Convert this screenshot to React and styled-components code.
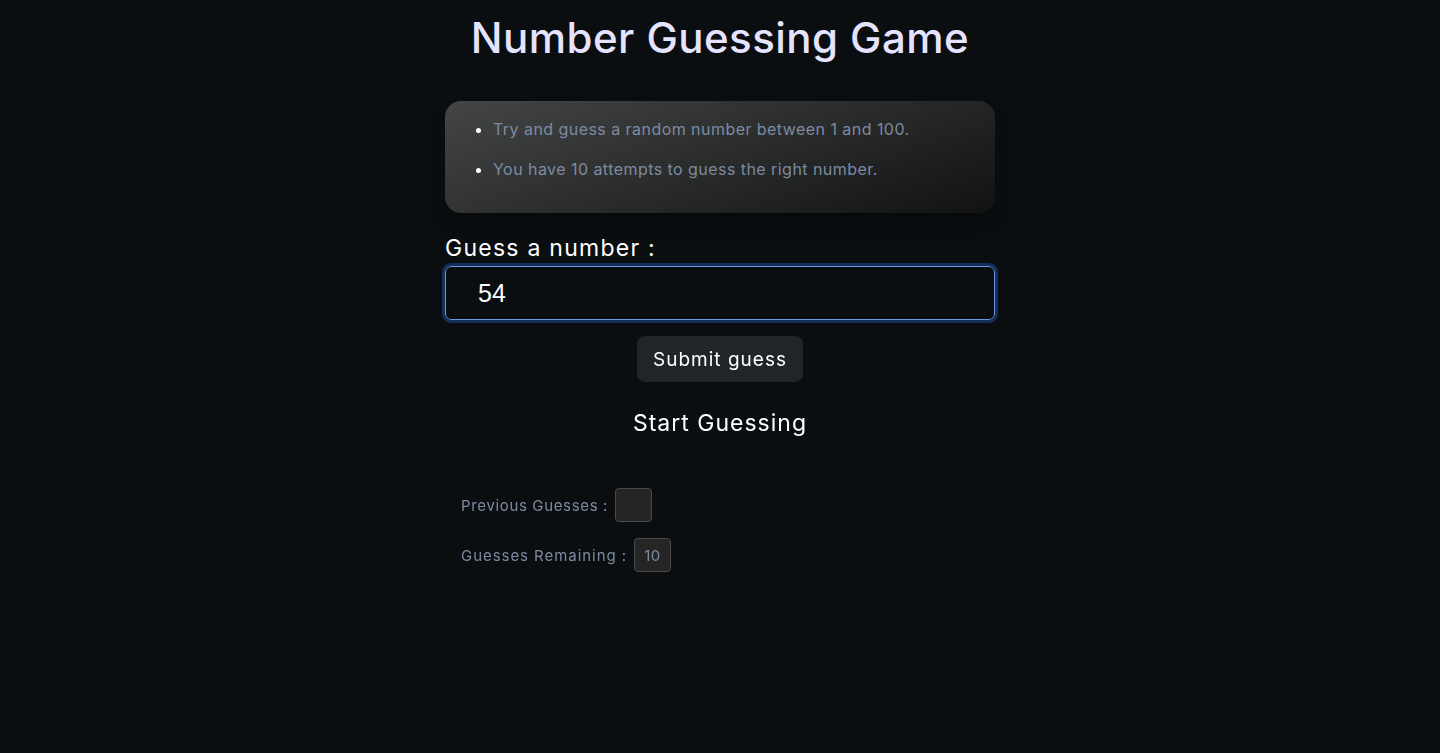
import React from 'react'
import styled, { createGlobalStyle } from 'styled-components'

const GlobalStyle = createGlobalStyle`
  * {
    box-sizing: border-box;
  }

  body {
    margin: 0;
    background-color: #0b0e10;
    font-family: 'Inter', 'Noto Sans', sans-serif;
  }
`

const Page = styled.main`
  min-height: 753px;
  display: flex;
  flex-direction: column;
  align-items: center;
  background-color: #0b0e10;
`

const Title = styled.h1`
  margin: 12px 0 0 0;
  font-size: 42px;
  font-weight: 500;
  line-height: 52px;
  color: #e6e3ff;
  letter-spacing: 0.45px;
`

const Container = styled.div`
  width: 550px;
  margin-top: 37px;
  display: flex;
  flex-direction: column;
`

const Rules = styled.ul`
  margin: 0;
  padding: 16px 0 16px 48px;
  border-radius: 16px;
  background: linear-gradient(160deg, #444546 0%, #282929 55%, #111213 100%);
  box-shadow: 0px 10px 20px -8px rgba(0, 0, 0, 0.6);
  color: #7d8ba0;

  li {
    font-size: 16px;
    line-height: 24px;
    letter-spacing: 0.45px;
    margin-bottom: 16px;

    &::marker {
      color: #ffffff;
    }
  }
`

const Label = styled.label`
  margin-top: 20px;
  font-size: 23px;
  line-height: 30px;
  letter-spacing: 1.25px;
  color: #ffffff;
`

const GuessInput = styled.input`
  margin-top: 3px;
  height: 54px;
  width: 100%;
  padding: 0 32px;
  border: 1px solid #6a9ae0;
  border-radius: 6px;
  outline: 3px solid #14305a;
  outline-offset: 0px;
  background-color: #0b0e10;
  color: #ffffff;
  caret-color: #ffffff;
  font-family: 'Liberation Sans', Arial, sans-serif;
  font-size: 25px;
`

const SubmitButton = styled.button`
  align-self: center;
  margin-top: 16px;
  height: 46px;
  padding: 0 16px;
  border: none;
  border-radius: 8px;
  background-color: #222528;
  color: #ffffff;
  font-family: inherit;
  font-size: 19px;
  letter-spacing: 1px;
`

const Status = styled.h2`
  margin: 26px 0 0 0;
  text-align: center;
  font-size: 23px;
  font-weight: 400;
  line-height: 30px;
  letter-spacing: 1px;
  color: #ffffff;
`

const Stats = styled.div`
  margin-top: 50px;
  padding-left: 16px;
  display: flex;
  flex-direction: column;
  gap: 16px;
`

const StatRow = styled.p`
  margin: 0;
  display: flex;
  align-items: center;
  gap: 7px;
  font-size: 15px;
  letter-spacing: ${props => props.spacing || 0.65}px;
  color: #7d8ba0;
`

const StatBox = styled.span`
  min-width: 37px;
  height: 34px;
  padding: 0 8px;
  display: inline-flex;
  align-items: center;
  justify-content: center;
  border: 1px solid #4a4a4a;
  border-radius: 4px;
  background-color: #252525;
  color: #7d8ba0;
  font-size: 15px;
  letter-spacing: 0.5px;
`

export default function App() {
  return (
    <>
      <GlobalStyle />
      <Page>
        <Title>Number Guessing Game</Title>
        <Container>
          <Rules>
            <li>Try and guess a random number between 1 and 100.</li>
            <li>You have 10 attempts to guess the right number.</li>
          </Rules>
          <Label htmlFor='guess'>Guess a number :</Label>
          <GuessInput id='guess' type='text' defaultValue='54' autoFocus />
          <SubmitButton>Submit guess</SubmitButton>
          <Status>Start Guessing</Status>
          <Stats>
            <StatRow>
              Previous Guesses :<StatBox />
            </StatRow>
            <StatRow spacing={0.95}>
              Guesses Remaining :<StatBox>10</StatBox>
            </StatRow>
          </Stats>
        </Container>
      </Page>
    </>
  )
}
